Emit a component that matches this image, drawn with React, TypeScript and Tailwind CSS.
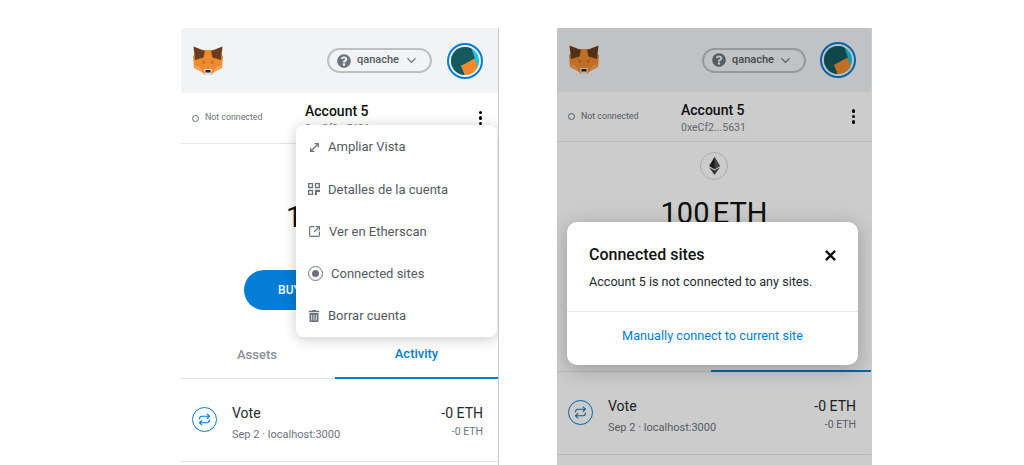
import React from "react";
import { ChevronDown, MoveDiagonal, Repeat, SquareArrowOutUpRight } from "lucide-react";
import { FaQuestionCircle, FaTrashAlt } from "react-icons/fa";

const FoxLogo = () => (
  <svg viewBox="0 0 30 30" className="w-[30px] h-[30px] shrink-0">
    <polygon points="0,10 11,4 19,4 30,10 29,22 21,26 18,29 12,29 9,26 1,22" fill="#ee8a2f" />
    <polygon points="0.5,0.5 12,5 10.5,11.5 2,14" fill="#6b3d1e" />
    <polygon points="29.5,0.5 18,5 19.5,11.5 28,14" fill="#6b3d1e" />
    <polygon points="9,14 13,17 10,18" fill="#c96a1c" />
    <polygon points="21,14 17,17 20,18" fill="#c96a1c" />
    <polygon points="1,19 7,21 9,26 3,23" fill="#f3a35c" />
    <polygon points="29,19 23,21 21,26 27,23" fill="#f3a35c" />
    <polygon points="11,23 19,23 18,29 12,29" fill="#e8dfd6" />
    <rect x="12.5" y="24" width="5" height="2.5" fill="#2d2018" />
  </svg>
);

const Avatar = () => (
  <div className="w-9 h-9 rounded-full border-2 border-[#037dd6] p-[2px] shrink-0">
    <svg viewBox="0 0 28 28" className="w-full h-full rounded-full">
      <rect width="28" height="28" fill="#18c2e8" />
      <polygon points="0,0 20,0 24,12 10,19 15,28 0,28" fill="#14595e" />
      <polygon points="10,19 23.5,11.5 28.5,25 15,31" fill="#f08a2c" />
    </svg>
  </div>
);

const EthIcon = () => (
  <div className="w-7 h-7 rounded-full border border-[#d6d8da] flex items-center justify-center">
    <svg viewBox="0 0 12 20" className="w-[11px] h-[18px]">
      <polygon points="6,0 0,10 6,13.5 12,10" fill="#222" />
      <polygon points="6,0 6,13.5 12,10" fill="#555" />
      <polygon points="0,11.5 6,20 12,11.5 6,15" fill="#444" />
    </svg>
  </div>
);

const Kebab = () => (
  <div className="flex flex-col gap-[2px]">
    <span className="w-[3.5px] h-[3.5px] rounded-full bg-black" />
    <span className="w-[3.5px] h-[3.5px] rounded-full bg-black" />
    <span className="w-[3.5px] h-[3.5px] rounded-full bg-black" />
  </div>
);

const QrIcon = () => (
  <svg viewBox="0 0 14 14" className="w-3 h-3 shrink-0" fill="#6a737d">
    <path d="M0 0h6v6H0zM1.5 1.5v3h3v-3zM8 0h6v6H8zM9.5 1.5v3h3v-3zM0 8h6v6H0zM1.5 9.5v3h3v-3z" fillRule="evenodd" />
    <path d="M8 8h6v2.5H10.5V14H8z" />
  </svg>
);

const TargetIcon = () => (
  <div className="w-[15px] h-[15px] rounded-full border-[1.5px] border-[#6a737d] flex items-center justify-center shrink-0">
    <span className="w-[7px] h-[7px] rounded-full bg-[#6a737d]" />
  </div>
);

const menuItems = [
  { label: "Ampliar Vista", icon: <MoveDiagonal size={13} strokeWidth={2.3} color="#6a737d" className="shrink-0" />, gap: "gap-[7px]" },
  { label: "Detalles de la cuenta", icon: <QrIcon />, gap: "gap-[8px]" },
  { label: "Ver en Etherscan", icon: <SquareArrowOutUpRight size={13} strokeWidth={2.2} color="#6a737d" className="shrink-0" />, gap: "gap-[8px]" },
  { label: "Connected sites", icon: <TargetIcon />, gap: "gap-[8px]" },
  { label: "Borrar cuenta", icon: <FaTrashAlt size={12} color="#6a737d" className="shrink-0" />, gap: "gap-[8px]" },
];

const AccountMenu = () => (
  <div className="absolute left-[115px] top-[97px] w-[201px] h-[212px] bg-white rounded-[8px] shadow-[0_2px_14px_rgba(0,0,0,0.22)] flex flex-col pt-[1px] z-10">
    {menuItems.map((item) => (
      <div key={item.label} className={`flex-1 flex items-center pl-[12px] text-[13px] text-[#535a61] ${item.gap}`}>
        {item.icon}
        <span>{item.label}</span>
      </div>
    ))}
  </div>
);

const ConnectedModal = () => (
  <div className="absolute left-[10px] top-[194px] w-[291px] h-[143px] bg-white rounded-[10px] shadow-[0_4px_20px_rgba(0,0,0,0.25)] flex flex-col z-20">
    <div className="flex-1 pl-[22px] pr-[21px] pt-[23px]">
      <div className="flex items-center justify-between">
        <span className="text-[16px] leading-[20px] font-medium text-[#111]">Connected sites</span>
        <svg viewBox="0 0 12 12" className="w-[11px] h-[11px] mr-[1px]" stroke="#111" strokeWidth="2.6">
          <path d="M1 1l10 10M11 1L1 11" />
        </svg>
      </div>
      <p className="mt-[8px] text-[12.6px] leading-[18px] text-[#24292e]">Account 5 is not connected to any sites.</p>
    </div>
    <div className="h-[54px] border-t border-[#e4e6e8] flex items-center justify-center pb-[6px] text-[12.7px] text-[#037dd6]">
      Manually connect to current site
    </div>
  </div>
);

const Wallet = ({ compact, className }: { compact?: boolean; className: string }) => (
  <div className={`relative h-full overflow-hidden flex flex-col bg-white border-r border-[#c9cbcd] ${className}`}>
    <div className={`flex items-center justify-between bg-[#f2f3f4] pl-[12px] pr-[15px] shrink-0 ${compact ? "h-[64px]" : "h-[65px]"}`}>
      <FoxLogo />
      <div className={`flex items-center ${compact ? "gap-[14px]" : "gap-[15px]"}`}>
        <div className={`h-[25px] rounded-full border-2 border-[#bbc0c5] flex items-center pl-[8px] pr-[11px] text-[11px] text-[#535a61] ${compact ? "w-[104px]" : "w-[105px]"}`}>
          <FaQuestionCircle size={14} color="#6a737d" />
          <span className="ml-[6px] font-medium">qanache</span>
          <ChevronDown size={15} className="ml-auto" color="#6a737d" />
        </div>
        <Avatar />
      </div>
    </div>

    <div className={`relative flex items-center justify-between pl-[11px] pr-[16px] border-b border-[#e4e6e8] shrink-0 ${compact ? "h-[50px]" : "h-[51px]"}`}>
      <div className="flex items-center gap-[6px] text-[8.8px] text-[#6a737d]">
        <span className="w-[7px] h-[7px] rounded-full border border-[#6a737d]" />
        Not connected
      </div>
      <div className="absolute left-[124px] top-[9px] flex flex-col">
        <span className="text-[14px] leading-[18px] font-medium text-[#111]">Account 5</span>
        <span className="mt-[2px] text-[10.5px] leading-[14px] text-[#7d848a]">0xeCf2...5631</span>
      </div>
      <Kebab />
    </div>

    <div className={`flex flex-col items-center shrink-0 ${compact ? "h-[230px] pt-[10px]" : "h-[235px] pt-[12px]"}`}>
      <EthIcon />
      <div className="mt-[15px] text-[29px] leading-[36px] text-[#111] [word-spacing:-4px]">100 ETH</div>
      {!compact && (
        <div className="mt-[35px] flex gap-[8px]">
          <div className="w-[92px] h-[40px] rounded-full bg-[#037dd6] text-white text-[12px] font-medium flex items-center justify-center">BUY</div>
          <div className="w-[92px] h-[40px] rounded-full bg-[#037dd6]" />
        </div>
      )}
      <div className="mt-auto w-full flex border-b border-[#e4e6e8] text-[13px] font-medium h-[46px]">
        <div className="w-[154px] pr-[2px] pb-[2px] flex items-center justify-center text-[#8a9096]">{!compact && "Assets"}</div>
        <div className="flex-1 pb-[2px] flex items-center justify-center text-[#037dd6] border-b-2 border-[#037dd6] -mb-px">{!compact && "Activity"}</div>
      </div>
    </div>

    <div className="h-[83px] flex items-center pl-[11px] pr-[15px] border-b border-[#e4e6e8] shrink-0 pt-[5px]">
      <div className="w-[25px] h-[25px] mb-[6px] rounded-full border border-[#037dd6] flex items-center justify-center shrink-0">
        <Repeat size={13} strokeWidth={2.2} color="#037dd6" />
      </div>
      <div className="ml-[15px] flex flex-col gap-[6px]">
        <span className="text-[14px] leading-[18px] text-[#24292e]">Vote</span>
        <span className="text-[11px] leading-[14px] text-[#6a737d]">Sep 2 · localhost:3000</span>
      </div>
      <div className="ml-auto flex flex-col items-end gap-[3px] mb-[2px]">
        <span className="text-[14px] leading-[18px] text-[#24292e]">-0 ETH</span>
        <span className="text-[10.5px] leading-[14px] text-[#6a737d]">-0 ETH</span>
      </div>
    </div>

    {compact ? <div className="absolute inset-0 bg-black/20 z-10" /> : <AccountMenu />}
    {compact && <ConnectedModal />}
  </div>
);

export default function App() {
  return (
    <div className="w-[1024px] h-[465px] overflow-hidden bg-white pt-[28px] flex font-['Roboto',sans-serif]">
      <Wallet className="ml-[181px] w-[318px]" />
      <Wallet compact className="ml-[58px] w-[315px]" />
    </div>
  );
}
